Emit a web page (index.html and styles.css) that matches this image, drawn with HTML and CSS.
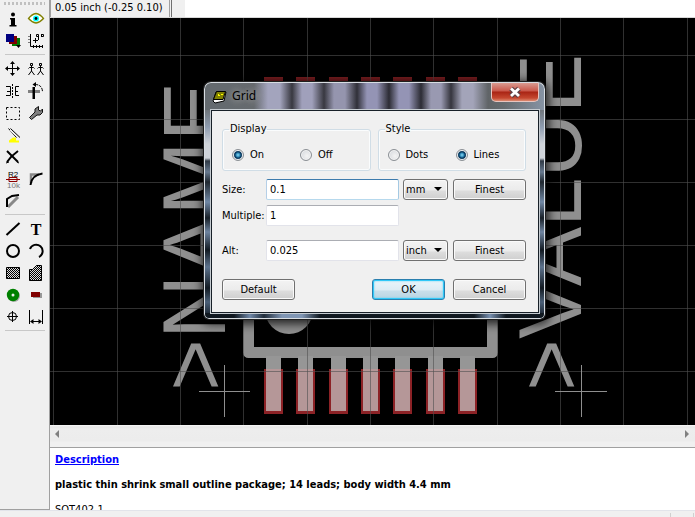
FILE: index.html
```html
<!DOCTYPE html>
<html lang="en">
<head>
<meta charset="utf-8">
<title>Package editor</title>
<link rel="stylesheet" href="styles.css">
</head>
<body>
<div class="app">
  <nav class="tools" aria-label="Tools">
    <div class="grip"></div>
    <div class="group">
      <button aria-label="Info"><svg viewBox="0 0 23 22"><circle cx="11" cy="6.500" r="2"/><path d="M8 10h5v7h1.500v1.500h-7V17H9v-5.500H8z"/></svg></button>
      <button aria-label="Show"><svg viewBox="0 0 23 22"><path d="M3.500 10.500Q7 6 11 5.500q4 .5 7.500 5-3.500 4-7.500 4.500-4-.5-7.500-4.500z" fill="#fff" stroke="#808000" stroke-width="1.300"/><circle cx="11" cy="10.500" r="3" fill="#0ff"/><circle cx="11" cy="10.500" r="1.400"/></svg></button>
      <button aria-label="Display layers"><svg viewBox="0 0 23 22"><path d="M10 8h8v8h-8z" fill="#007a00"/><path d="M7 6h8v8H7z" fill="#800000"/><path d="M4 4h8v8H4z" fill="#000080"/><path d="M14 15h5l-2.500 3z"/></svg></button>
      <button aria-label="Mark"><svg viewBox="0 0 23 22"><path d="M5.500 4v12.500H18" class="s1"/><path d="M3.500 6.500h1M3.500 9.500h1M3.500 12.500h1M8.500 18v-3M11.500 18v-3M14.500 18v-3M17.500 18v-3M8 10.500h5M10.500 8v5M11.500 4.500v2h2v-2zM13.500 6v4M16.500 4.500v2h2v-2zM16.500 4v3" class="s1"/></svg></button>
    </div>
    <div class="rule"></div>
    <div class="group">
      <button aria-label="Move"><svg viewBox="0 0 23 22"><path d="M10.500 4v13M4 10.500h13" class="s1"/><path d="M10.500 3 8 6h5zM10.500 18 8 15h5zM3 10.500 6 8v5zM18 10.500 15 8v5z"/></svg></button>
      <button aria-label="Copy"><svg viewBox="0 0 23 22"><path d="M5.500 5.500h2v2h-2zM14.500 5.500h2v2h-2zM3.500 10.500l1-1h4l1 1M12.500 10.500l1-1h4l1 1M6.500 8v5l-3 4M6.500 13l3 4M15.500 8v5l-3 4M15.500 13l3 4" class="s1"/></svg></button>
      <button aria-label="Mirror"><svg viewBox="0 0 23 22"><path d="M4 6.500h4.500v9H4M5 11.500h3M17 6.500h-3.500v9H17M16 11.500h-2" class="s1"/><path d="M10.500 4v15" class="s1 dash"/></svg></button>
      <button aria-label="Rotate"><svg viewBox="0 0 23 22"><path d="M3 10h12v3H3z" fill="#808080"/><path d="M7.500 7H10v12H7.500z"/><path d="M10 4.500q7 0 7.500 7" class="s1" stroke-dasharray="3 1"/><path d="M7.500 4.500 11 2v5z"/></svg></button>
      <button aria-label="Group"><svg viewBox="0 0 23 22"><path d="M4.500 5.500h13v12h-13z" class="s1" stroke-dasharray="2 2"/></svg></button>
      <button aria-label="Change"><svg viewBox="0 0 23 22"><path d="M4.500 15.500 10 10 10 7 13.500 4.500V8l2 1L17.500 7v3.500L15 13h-3l-5.500 4.500z" fill="#808080" stroke="#111"/></svg></button>
      <button aria-label="Paste"><svg viewBox="0 0 23 22"><path d="M7 18.500v-2l4-3h3v3h3v2z" fill="#ff0"/><path d="m6.500 4.500 8 9M8.500 4.500l9.500 9" class="s1"/><path d="m8 6 8 8" stroke="#eee"/></svg></button>
      <i></i>
      <button aria-label="Delete"><svg viewBox="0 0 23 22"><path d="m5 5 11 11" class="s2"/><path d="M5 16Q9 10 16 5" fill="none" stroke="#000" stroke-width="2"/><path d="m4 17 3-1M15 16l2 1" class="s1"/></svg></button>
      <i></i>
      <button aria-label="Value"><svg viewBox="0 0 23 22"><text x="6" y="9" class="tag">R2</text><path d="M4 11.500h14M7 9.500h8v4H7z" fill="none" stroke="#8b0000"/><text x="5" y="20" class="tag dim">10k</text></svg></button>
      <button aria-label="Miter"><svg viewBox="0 0 23 22"><path d="M6 15V6.500h8" fill="none" stroke="#888" stroke-width="2.500"/><path d="M5.500 17q1-10 12-11.500" class="s2"/></svg></button>
      <button aria-label="Split"><svg viewBox="0 0 23 22"><path d="M6 17 16 7" fill="none" stroke="#888" stroke-width="3"/><path d="M5 17V9l5-3 7-1" class="s2"/></svg></button>
      <i></i>
    </div>
    <div class="rule"></div>
    <div class="group">
      <button aria-label="Wire"><svg viewBox="0 0 23 22"><path d="M4.500 17 17.500 5" class="s2"/></svg></button>
      <button aria-label="Text"><svg viewBox="0 0 23 22"><text x="11" y="17" class="letter">T</text></svg></button>
      <button aria-label="Circle"><svg viewBox="0 0 23 22"><circle cx="11" cy="11" r="6" class="s2"/></svg></button>
      <button aria-label="Arc"><svg viewBox="0 0 23 22"><path d="M5 9a6.500 6.500 0 1 1 9 8" class="s2"/></svg></button>
      <button aria-label="Rectangle"><svg viewBox="0 0 23 22"><defs><pattern id="weave" width="2" height="2" patternUnits="userSpaceOnUse"><path d="M0 0h2v2H0z" fill="#ddd"/><path d="M0 0h1v1H0zM1 1h1v1H1z"/></pattern></defs><path d="M4.500 5.500h13v11h-13z" fill="url(#weave)" stroke="#000"/></svg></button>
      <button aria-label="Polygon"><svg viewBox="0 0 23 22"><path d="M4.500 18.500v-11h3l4-4h5v15z" fill="url(#weave)" stroke="#000"/></svg></button>
      <button aria-label="Pad"><svg viewBox="0 0 23 22"><circle cx="12" cy="12" r="6" fill="#aaa"/><circle cx="11" cy="11" r="6.200" fill="#008000"/><circle cx="11" cy="11" r="1.500" fill="#eee"/></svg></button>
      <button aria-label="Smd"><svg viewBox="0 0 23 22"><path d="M8 9h9v5H8z" fill="#999"/><path d="M6 8h9v5H6z" fill="#800000"/></svg></button>
      <button aria-label="Hole"><svg viewBox="0 0 23 22"><circle cx="10.500" cy="10.500" r="4" class="s1"/><path d="M10.500 5v11M5 10.500h11" class="s1"/></svg></button>
      <button aria-label="Dimension"><svg viewBox="0 0 23 22"><path d="M4.500 4v14M17.500 4v14M6 15.500h10" class="s1"/><path d="m5 15.500 3.500-2.500v5zM17 15.500 13.500 13v5z"/></svg></button>
    </div>
    <div class="rule"></div>
  </nav>

  <main class="work">
    <header class="coords"><output>0.05 inch (-0.25 0.10)</output><span class="cell"></span><input class="command" type="text" aria-label="Command line"></header>

    <section class="canvas" aria-label="Drawing">
      <svg viewBox="50 18 645 407" preserveAspectRatio="xMinYMin slice">
        <g class="silk">
          <text transform="translate(225 391) rotate(-90)">&gt;NAME</text>
          <text transform="translate(581 391) rotate(-90)">&gt;VALUE</text>
          <path d="M248.500 96v256.500h244V96" class="body"/>
          <circle cx="289" cy="310" r="24"/>
        </g>
        <defs>
          <g id="pin"><path d="M2-13h15V1H2z" fill="#969696"/><path d="M0 0h19v45H0z" fill="#8c2226"/><path d="M2 0h15v42H2z" fill="#b59798"/></g>
        </defs>
        <use href="#pin" x="264" y="369"/><use href="#pin" x="296" y="369"/><use href="#pin" x="329" y="369"/><use href="#pin" x="361" y="369"/><use href="#pin" x="393" y="369"/><use href="#pin" x="426" y="369"/><use href="#pin" x="458" y="369"/>
        <path d="M264 79h19m13 0h19m14 0h19m13 0h19m13 0h19m14 0h19m13 0h19" stroke="#7c1d20" stroke-width="4"/>
        <path d="M53.500 18v407M117.500 18v407M180.500 18v407M243.500 18v407M307.500 18v407M370.500 18v407M433.500 18v407M497.500 18v407M560.500 18v407M623.500 18v407M687.500 18v407M50 55.500h645M50 119.500h645M50 182.500h645M50 245.500h645M50 308.500h645M50 371.500h645" class="lines"/>
        <path d="M199 391.500h51M224.500 365v52M555 391.500h52M581.500 365v52" stroke="#8f8f8f"/>
      </svg>
    </section>

    <div class="scroll"><span class="left"></span><span class="right"></span></div>

    <section class="about">
      <a href="#description">Description</a>
      <h1>plastic thin shrink small outline package; 14 leads; body width 4.4 mm</h1>
      <p>SOT402-1</p>
    </section>
  </main>
  <footer class="status"><span></span></footer>
</div>

<form class="dialog" role="dialog" aria-labelledby="title">
  <header class="titlebar">
    <svg class="logo" viewBox="0 0 15 14"><path d="M4 2h10l-2 9-9 2-2-2z" fill="#fff" stroke="#000"/><path d="M4.500 1.500h9l-2.500 8H1.500z" fill="#808000" stroke="#000"/><path d="M6 4h1v1h1v1H6zM9 4h2v1H9z" fill="#ff0"/></svg>
    <h2 id="title">Grid</h2>
    <button type="button" class="close" aria-label="Close"><svg viewBox="0 0 14 12"><path d="m3.500 3 7 6.500m0-6.500-7 6.500" stroke="#5c4146" stroke-width="4.500"/><path d="m3.500 3 7 6.500m0-6.500-7 6.500" stroke="#fff" stroke-width="2.500"/></svg></button>
  </header>
  <div class="client">
    <div class="boxes">
      <fieldset>
        <legend>Display</legend>
        <label><input type="radio" name="display" checked>On</label>
        <label><input type="radio" name="display">Off</label>
      </fieldset>
      <fieldset>
        <legend>Style</legend>
        <label><input type="radio" name="style">Dots</label>
        <label><input type="radio" name="style" checked>Lines</label>
      </fieldset>
    </div>
    <div class="fields">
      <label for="size">Size:</label>
      <input id="size" class="active" type="text" value="0.1">
      <span class="pick"><select aria-label="Size unit"><option>mm</option><option>inch</option></select></span>
      <button type="button">Finest</button>
      <label for="multiple">Multiple:</label>
      <input id="multiple" type="text" value="1">
    </div>
    <div class="fields">
      <label for="alt">Alt:</label>
      <input id="alt" type="text" value="0.025">
      <span class="pick"><select aria-label="Alt unit"><option>inch</option><option>mm</option></select></span>
      <button type="button">Finest</button>
    </div>
    <div class="actions">
      <button type="button">Default</button>
      <button type="button" class="primary">OK</button>
      <button type="button">Cancel</button>
    </div>
  </div>
</form>
</body>
</html>
```
FILE: styles.css
```css
* { box-sizing: border-box; }

body {
  margin: 0;
  overflow: hidden;
  background: #f0f0f0;
  color: #000;
  font: 11px/14px "DejaVu Sans Condensed", "DejaVu Sans", sans-serif;
}

button, input, select { font: inherit; color: inherit; margin: 0; }

.app {
  display: grid;
  grid-template: minmax(0, 1fr) 7px / 50px minmax(0, 1fr);
  height: 100vh;
}

/* tool palette */
.tools {
  border-right: 1px solid #a0a0a0;
  border-bottom: 1px solid #a0a0a0;
  overflow: hidden;
}
.grip {
  height: 3px;
  margin: 2px 4px 3px;
  background: repeating-linear-gradient(90deg, #c0c0c0 0 2px, #f0f0f0 2px 4px);
}
.group {
  display: grid;
  grid-template-columns: 23px 23px;
  grid-auto-rows: 22px;
  padding-left: 2px;
}
.group button { padding: 0; border: 0; background: none; }
.group svg { display: block; width: 23px; height: 22px; }
.rule { height: 1px; margin: 2px 4px 3px 5px; background: #c8c8c8; }
.s1 { fill: none; stroke: #000; stroke-width: 1; }
.s2 { fill: none; stroke: #000; stroke-width: 2; }
.dash { stroke-dasharray: 2 1; }
.tag { font: 8px "Liberation Sans", sans-serif; }
.dim { fill: #777; }
.letter { font: bold 16px "Liberation Serif", serif; text-anchor: middle; }

/* work area */
.work { display: flex; flex-direction: column; min-height: 0; }
.coords {
  display: flex;
  flex: none;
  height: 18px;
  border-bottom: 1px solid #d8d8d8;
}
.coords output {
  width: 120px;
  padding: 1px 0 0 4px;
  border: solid #a0a0a0;
  border-width: 0 1px;
}
.coords .cell { width: 14px; margin-left: 1px; border-left: 1px solid #707070; }
.command { flex: 1; min-width: 0; border: 0; background: #fff; }

.canvas { flex: 1; min-height: 0; background: #000; }
.canvas svg { display: block; width: 100%; height: 100%; }
.silk { fill: #8f8f8f; }
.silk text { font: 89px "Liberation Sans", sans-serif; }
.body { fill: none; stroke: #8f8f8f; stroke-width: 11; stroke-linejoin: round; }
.lines { fill: none; stroke: rgba(80, 80, 80, .6); }

.scroll {
  display: flex;
  flex: none;
  align-items: center;
  justify-content: space-between;
  height: 22px;
  padding: 0 6px 5px 5px;
  background: linear-gradient(#f8f8f8, #e6e6e6 2px, #ededed 4px, #ececec 16px, #f0f0f0 17px);
}
.scroll span { border: 4px solid transparent; }
.scroll .left { border-right-color: #808080; border-left: 0; }
.scroll .right { border-left-color: #808080; border-right: 0; }

.about {
  flex: none;
  height: 63px;
  padding: 5px;
  border-top: 1px solid #a0a0a0;
  overflow: hidden;
  background: #fff;
}
.about a { display: block; font-weight: bold; color: #00f; }
.about h1 { margin: 11px 0; font: inherit; font-weight: bold; white-space: nowrap; }
.about p { margin: 0; }

.status { grid-column: 1 / -1; display: flex; justify-content: flex-end; border-top: 1px solid #e2e4ea; }
.status span { width: 24px; margin: 2px 1px 0; border: solid #d0d0d0; border-width: 0 1px; }

/* floating window */
.dialog {
  position: absolute;
  left: 204px;
  top: 82px;
  width: 341px;
  padding: 0 6px 6px 7px;
  border-radius: 7px 7px 5px 5px;
  background:
    linear-gradient(90deg, #646a6f 0 24px, #666a6e 50px, #a3a4bd 64px 76px, #383840 88px, #a0a0bb 98px 108px, #383840 120px, #9595ae 130px 141px, #303038 153px, #9494b5 163px 173px, #2c2c34 185px, #9494b5 195px 205px, #2c2c34 217px, #9999b1 227px 237px, #35353d 247px, #a3a4b9 258px 269px, #606467 284px, #666c70 300px, #8794a5) 0 0 / 100% 28px no-repeat,
    linear-gradient(90deg, #101820 30px, #7088a8 46px, #202c3a 60px, #8096b4 78px 98px, #101820 116px 270px, #7890b0 286px, #101820 302px) 0 100% / 100% 6px no-repeat,
    linear-gradient(#70767c 28px, #8e9cb0 45px, #d0d4da 62px 76px, #303a46 79px, #687a90 90px, #202830 100px, #7088a5 120px, #182028 136px, #6e84a0 150px, #121a22 168px, #5d738e 185px, #121a22 206px, #4b6078 220px, #0d141c);
  box-shadow: inset 0 0 0 1px #d8dde2, 0 0 0 1px #202020, 1px 2px 10px 3px rgba(0, 0, 0, .75);
}
.titlebar { display: flex; align-items: center; height: 28px; }
.logo { width: 15px; height: 14px; margin: 1px 5px 0 1px; }
.titlebar h2 {
  flex: 1;
  margin: 0;
  font: 12px/16px "Noto Sans", sans-serif;
  text-shadow: 0 0 6px #aaa, 0 0 8px #999;
}
.close {
  align-self: flex-start;
  display: grid;
  place-items: center;
  width: 48px;
  height: 19px;
  margin-top: 1px;
  padding: 0;
  border: 1px solid #e8c5bf;
  border-top: 0;
  border-radius: 0 0 5px 5px;
  background: linear-gradient(#d99a90, #c9574a 8px, #a92414 9px, #c5472f 15px, #dc8b72);
}
.close svg { width: 16px; height: 14px; }

.client {
  padding: 11px 12px 12px 10px;
  border: 1px solid #182028;
  background: #f0f0f0;
  box-shadow: 0 0 0 1px #c5cbd0;
}
.boxes { display: grid; grid-template-columns: 1fr 1fr; gap: 7px; }
fieldset {
  display: grid;
  grid-template-columns: 68px 1fr;
  align-content: start;
  min-width: 0;
  height: 49px;
  margin: 0;
  padding: 12px 0 0 9px;
  border: 1px solid #d0dde6;
  border-radius: 3px;
  box-shadow: inset 0 0 0 1px #fafcfd;
}
legend { height: 14px; margin-left: -3px; padding: 0 1px; }
fieldset label { display: flex; align-items: center; height: 14px; gap: 6px; }
input[type="radio"] {
  appearance: none;
  width: 12px;
  height: 12px;
  border: 1px solid #8a8f94;
  border-radius: 50%;
  background: radial-gradient(circle at 60% 60%, #f4f4f4, #cfd3d8);
  box-shadow: inset 0 0 0 1px #f4f4f4;
}
input[type="radio"]:checked {
  background: radial-gradient(circle, #8fdcf6 0, #2a86b5 2px, #0c3c62 3px, #0c3c62 4px, #e8ecef 5px);
}

.fields {
  display: grid;
  grid-template-columns: 40px 1fr 45px 74px;
  grid-auto-rows: 21px;
  gap: 5px 4px;
  margin-top: 8px;
}
.fields + .fields { margin-top: 14px; }
.fields > label { line-height: 22px; white-space: nowrap; }
.fields > button { width: 73px; justify-self: end; }
input[type="text"] { border-radius: 0; outline: 0; }
.fields input {
  min-width: 0;
  height: 21px;
  padding: 0 3px;
  border: 1px solid #e2e3ea;
  border-top-color: #abadb3;
  border-radius: 2px;
  background: #fff;
}
.fields .active { border-color: #3d7bad #a4c9e3 #b7d9ed #b5cfe7; }

.client button, select {
  height: 21px;
  padding: 0;
  border: 1px solid #707070;
  border-radius: 3px;
  background: linear-gradient(#f3f3f3, #ebebeb 10px, #dddddd 11px, #cfcfcf);
  box-shadow: inset 0 0 0 1px #fafafa;
}
.pick { position: relative; }
select { appearance: none; display: block; width: 45px; padding-left: 2px; }
.pick::after {
  content: "";
  position: absolute;
  right: 6px;
  top: 8px;
  border: solid transparent;
  border-width: 4px 4px 0;
  border-top-color: #000;
  pointer-events: none;
}
.actions { display: flex; gap: 8px; margin-top: 18px; }
.actions button { width: 73px; }
.actions button:first-child { margin-right: auto; }
.client .primary {
  border-color: #2a7fae;
  background: linear-gradient(#eaf5fa, #dcecf4 10px, #c8dfeb 11px, #b8d4e2);
  box-shadow: inset 0 0 0 1px #30c8f8, inset 0 0 2px 1px #60d0f4;
}
```
